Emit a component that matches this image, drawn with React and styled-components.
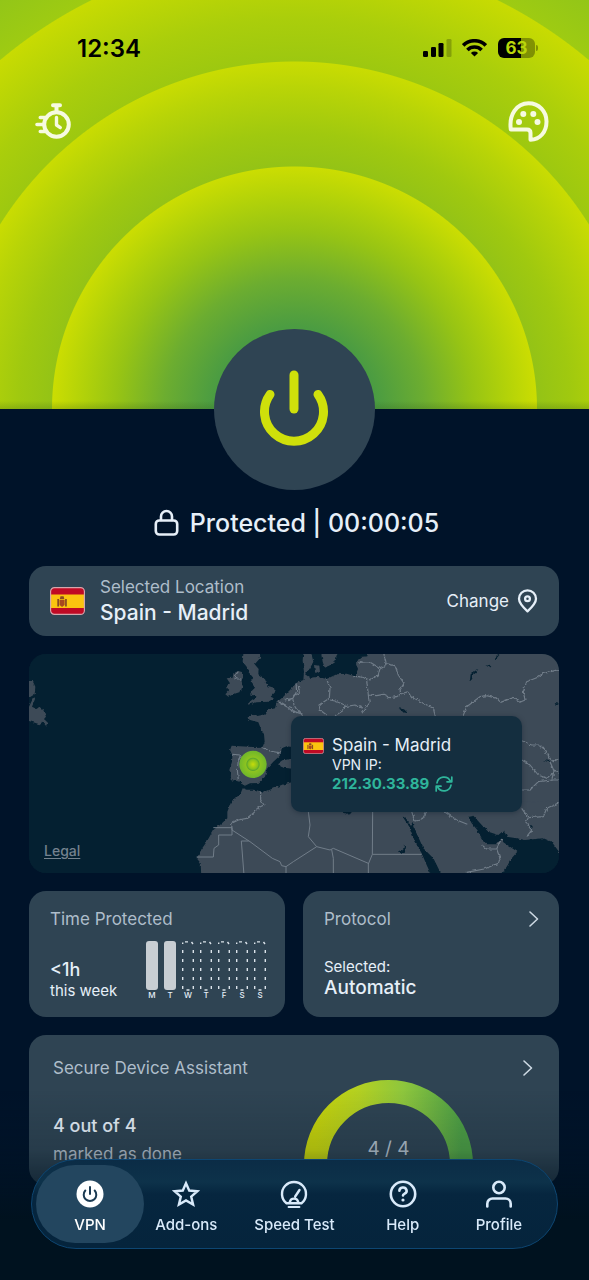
import React from "react";
import styled, { createGlobalStyle, css } from "styled-components";

const colors = {
  page: "#001329",
  card: "#2f4453",
  sea: "#042031",
  land: "#3d4a57",
  border: "#717d89",
  callout: "#142e3f",
  lime: "#cfe00b",
  title: "#aebdca",
  text: "#e6eff8",
  teal: "#2fb59b",
};

const GlobalStyle = createGlobalStyle`
  *, *::before, *::after { box-sizing: border-box; }
  body {
    margin: 0;
    background: ${colors.page};
    color: ${colors.text};
    font-family: Inter, "Liberation Sans", sans-serif;
  }
  button { font: inherit; color: inherit; background: none; border: 0; padding: 0; cursor: pointer; }
  p, h1, h2 { margin: 0; font-weight: 400; }
  svg { display: block; }
`;

const Page = styled.div`
  min-height: 100vh;
  display: flex;
  flex-direction: column;
`;

const Hero = styled.header`
  height: 409px;
  padding-top: 28px;
  background:
    linear-gradient(to top, rgba(40, 80, 20, 0.22), rgba(40, 80, 20, 0) 8px),
    radial-gradient(
      circle at 50% 100%,
      #46993f 0, #4b9c42 82px, #6cad30 130px, #97c414 178px, #b2d209 212px, #cbdd02 242px,
      #94c316 243px, #a0c90f 276px, #b8d407 320px, #c9dc02 347px,
      #9dc810 348px, #aace0b 390px, #bcd605 430px, #c8db02 456px,
      #9ecb12 457px, #8fc41a 520px
    );
`;

const StatusBar = styled.div`
  height: 40px;
  padding: 0 51px 0 77px;
  display: flex;
  align-items: center;
  justify-content: space-between;
  color: #000;
`;

const Clock = styled.time`
  font-size: 24px;
  font-weight: 600;
`;

const StatusIcons = styled.div`
  display: flex;
  align-items: center;
  gap: 10px;
`;

const Battery = styled.div`
  width: 37px;
  height: 20px;
  margin-left: 1px;
  border-radius: 6px;
  display: flex;
  align-items: center;
  justify-content: center;
  font-size: 17px;
  line-height: 20px;
  font-weight: 700;
  color: #b9d60a;
  background: linear-gradient(to right, #000 63%, rgba(0, 0, 0, 0.32) 63%);
`;

const HeroActions = styled.div`
  height: 40px;
  margin-top: 33px;
  padding: 0 40px 0 35px;
  display: flex;
  align-items: center;
  justify-content: space-between;
`;

const PowerButton = styled.button`
  position: relative;
  align-self: center;
  width: 161px;
  height: 161px;
  margin-top: -80px;
  border-radius: 50%;
  background: ${colors.card};
  display: flex;
  align-items: center;
  justify-content: center;
`;

const StatusLine = styled.p`
  height: 34px;
  margin: 16px 0 26px;
  padding-left: 4px;
  display: flex;
  align-items: center;
  justify-content: center;
  gap: 11px;
  font-size: 25px;
  line-height: 34px;
  font-weight: 500;
`;

const Content = styled.main`
  padding: 0 30px 96px 29px;
  display: flex;
  flex-direction: column;
  gap: 18px;
`;

const Card = styled.section`
  border-radius: 17px;
  background: ${colors.card};
`;

const LocationCard = styled(Card)`
  padding: 9px 21px;
  display: flex;
  align-items: center;
  gap: 15px;
`;

const LocationText = styled.div`
  flex: 1;
`;

const Label = styled.h2`
  font-size: 17px;
  line-height: 24px;
  color: ${colors.title};
`;

const LocationName = styled.p`
  font-size: 21px;
  line-height: 28px;
  font-weight: 500;
`;

const ChangeButton = styled.button`
  display: flex;
  align-items: center;
  gap: 8px;
  font-size: 17px;
`;

const MapCard = styled(Card)`
  position: relative;
  height: 219px;
  overflow: hidden;
  background: ${colors.sea};
`;

const MapDrawing = styled.svg`
  width: 100%;
  height: 100%;
`;

const LegalLink = styled.a`
  position: absolute;
  left: 15px;
  bottom: 12px;
  font-size: 14px;
  line-height: 20px;
  font-weight: 500;
  color: #74828e;
  text-underline-offset: 2px;
`;

const Callout = styled.div`
  position: absolute;
  top: 62px;
  right: 37px;
  width: 231px;
  padding: 19px 12px;
  border-radius: 10px;
  background: ${colors.callout};
  box-shadow: 0 1px 5px rgba(0, 20, 35, 0.35);
  display: flex;
  gap: 8px;
`;

const CalloutFlag = styled.div`
  padding-top: 3px;
`;

const CalloutName = styled.p`
  font-size: 17px;
  line-height: 20px;
`;

const CalloutLine = styled.p`
  display: flex;
  align-items: center;
  gap: 6px;
  font-size: ${(p) => (p.$accent ? 15 : 14)}px;
  line-height: 19px;
  font-weight: ${(p) => (p.$accent ? 700 : 400)};
  color: ${(p) => (p.$accent ? colors.teal : "inherit")};
`;

const CardPair = styled.div`
  display: grid;
  grid-template-columns: 1fr 1fr;
  gap: 18px;
`;

const StatCard = styled(Card)`
  padding: 16px 19px 17px 21px;
  display: flex;
  flex-direction: column;
  gap: 9px;
`;

const TitleRow = styled.div`
  display: flex;
  align-items: center;
  justify-content: space-between;
`;

const StatBody = styled.div`
  height: 60px;
  display: flex;
  align-items: flex-end;
  justify-content: space-between;
`;

const Strong = styled.p`
  font-size: ${(p) => (p.$large ? 19 : 18)}px;
  line-height: 24px;
  font-weight: 500;
`;

const Small = styled.p`
  font-size: 15px;
  line-height: 18px;
`;

const Week = styled.ol`
  margin: 0;
  padding: 0;
  list-style: none;
  display: flex;
  gap: 6px;
`;

const Day = styled.li`
  width: 12px;
  display: flex;
  flex-direction: column;
  align-items: center;
  font-size: 8px;
  line-height: 10px;
  font-weight: 500;
`;

const DayBar = styled.div`
  width: 12px;
  height: 49px;
  ${(p) =>
    p.$filled &&
    css`
      border-radius: 3px;
      background: #c8ced3;
    `}
`;

const AssistantCard = styled(Card)`
  height: 150px;
  padding: 21px 25px 0 24px;
  overflow: hidden;
`;

const AssistantBody = styled.div`
  display: grid;
  grid-template-columns: 190px 1fr;
`;

const AssistantText = styled.div`
  padding-top: 34px;
`;

const Muted = styled.p`
  margin-top: 4px;
  font-size: 17px;
  line-height: 24px;
  color: #b3bfca;
`;

const Gauge = styled.div`
  justify-self: center;
  display: grid;
  > * { grid-area: 1 / 1; }
`;

const GaugeValue = styled.p`
  justify-self: center;
  padding-top: 56px;
  font-size: 19px;
  line-height: 26px;
  color: #b3bfca;
`;

const BottomFade = styled.div`
  position: fixed;
  left: 0;
  right: 0;
  bottom: 0;
  height: 190px;
  pointer-events: none;
  background: linear-gradient(to bottom, rgba(0, 18, 32, 0), rgba(0, 18, 32, 0.16) 60px, rgba(0, 18, 32, 0.55) 95px, #00121f 130px);
`;

const NavBar = styled.nav`
  position: fixed;
  left: 31px;
  right: 31px;
  bottom: 31px;
  height: 90px;
  padding: 5px 4px;
  border: 1px solid #0d4672;
  border-radius: 45px;
  background: linear-gradient(to bottom, #0b2c46, #0d324a 22px, #06263f 34px, #05243c);
  display: grid;
  grid-template-columns: 9fr 7fr 11fr 7fr 9fr;
`;

const NavItem = styled.button`
  min-width: 0;
  padding-top: 7px;
  border-radius: 39px;
  background: ${(p) => (p.$active ? "#23465f" : "none")};
  color: ${(p) => (p.$active ? "#ffffff" : "#d9eafa")};
  display: flex;
  flex-direction: column;
  align-items: center;
  justify-content: center;
  gap: 7px;
  font-size: 15px;
  line-height: 20px;
  font-weight: 500;
  white-space: nowrap;
`;

const stroke = { fill: "none", stroke: "currentColor", strokeLinecap: "round", strokeLinejoin: "round" };

const SignalIcon = () => (
  <svg width="29" height="18" viewBox="0 0 29 18" aria-hidden="true">
    <rect x="0" y="12" width="5" height="6" rx="1.3" />
    <rect x="8" y="8" width="5" height="10" rx="1.3" />
    <rect x="15.500" y="4" width="5" height="14" rx="1.3" />
    <rect x="23.500" y="0" width="5" height="18" rx="1.3" opacity="0.22" />
  </svg>
);

const WifiIcon = () => (
  <svg width="25" height="18" viewBox="0 0 25 18" fill="none" stroke="#000" strokeWidth="3.600" aria-hidden="true">
    <path d="M1.200 6.400a16 16 0 0 1 22.600 0" />
    <path d="M5.400 10.900a10 10 0 0 1 14.200 0" />
    <path d="M12.500 17.600l-3.600-3.700a5.100 5.100 0 0 1 7.200 0z" fill="#000" stroke="none" />
  </svg>
);

const BatteryTip = styled.span`
  width: 2px;
  height: 6px;
  margin-left: -9px;
  border-radius: 0 2px 2px 0;
  background: rgba(0, 0, 0, 0.32);
`;

const StopwatchIcon = () => (
  <svg width="37" height="36" viewBox="0 0 37 36" color="#f6fae0" strokeWidth="4" {...stroke} aria-hidden="true">
    <circle cx="21.500" cy="21.500" r="12.300" />
    <path d="M18 2.200h7M21.500 2.500v6" />
    <path d="M21.500 14.500v7.500l3.800 2.600" strokeWidth="3.400" />
    <path d="M5.300 14.500h5M2 21.500h7M5.300 28.500h5" strokeWidth="3.600" />
  </svg>
);

const PaletteIcon = () => (
  <svg width="41" height="41" viewBox="0 0 41 41" color="#f6fae0" strokeWidth="4" {...stroke} aria-hidden="true">
    <path d="M2.800 28.500C.8 14 8.500 2.300 20.500 2.300c10.600 0 18 8 18 18.200 0 10.500-6.500 18.200-16 18.200V32c0-2.300-1.200-3.500-3.500-3.500z" />
    <g fill="currentColor" stroke="none">
      <circle cx="11" cy="21" r="3" />
      <circle cx="15.300" cy="13" r="3" />
      <circle cx="25.300" cy="13" r="3" />
      <circle cx="29.500" cy="21" r="3" />
    </g>
  </svg>
);

const PowerIcon = () => (
  <svg width="71" height="79" viewBox="0 0 71 79" color={colors.lime} strokeWidth="9" {...stroke} aria-hidden="true">
    <path d="M35 5v34" />
    <path d="M11 24.500A29.500 29.500 0 1 0 59 24.500" />
  </svg>
);

const LockIcon = () => (
  <svg width="25" height="28" viewBox="0 0 25 28" strokeWidth="2.600" {...stroke} aria-hidden="true">
    <rect x="1.800" y="11.500" width="21.400" height="14" rx="3.500" />
    <path d="M7 11V7.500a5.500 5.500 0 0 1 11 0V11" />
  </svg>
);

const PinIcon = () => (
  <svg width="21" height="24" viewBox="0 0 21 24" strokeWidth="2.300" {...stroke} aria-hidden="true">
    <path d="M10.500 22.300C5.500 17.800 2 13.800 2 9.800a8.500 8.500 0 0 1 17 0c0 4-3.500 8-8.500 12.500z" />
    <circle cx="10.500" cy="9.700" r="2.400" />
  </svg>
);

const Chevron = () => (
  <svg width="12" height="18" viewBox="0 0 12 18" color="#cdd9e3" strokeWidth="1.600" {...stroke} aria-hidden="true">
    <path d="M2 2l7.500 7-7.500 7" />
  </svg>
);

const RefreshIcon = () => (
  <svg width="18" height="16" viewBox="0 0 18 16" strokeWidth="1.700" {...stroke} aria-hidden="true">
    <path d="M2 6.800A7.100 7.100 0 0 1 15.300 5M16 9.200A7.100 7.100 0 0 1 2.700 11" />
    <path d="M16.800 1v4.800H12M1.200 15v-4.800H6" />
  </svg>
);

const Flag = ({ width, height }) => (
  <svg width={width} height={height} viewBox="0 0 36 28" preserveAspectRatio="none" role="img" aria-label="Spain">
    <rect x="0.600" y="0.600" width="34.800" height="26.800" rx="4" fill="#c00a24" />
    <rect x="1" y="7.500" width="34" height="13.500" fill="#fbc40f" />
    <g fill="#8a4a22">
      <rect x="7.500" y="12" width="1.800" height="7.500" />
      <rect x="15.500" y="12" width="1.800" height="7.500" />
      <path d="M9.800 13h5.200v5l-2.600 2-2.600-2z" fill="#a8481f" />
      <path d="M10 12.300l.8-3h3.200l.8 3z" />
    </g>
    <rect x="0.600" y="0.600" width="34.800" height="26.800" rx="4" fill="none" stroke="#d5a6ac" strokeWidth="1.200" />
  </svg>
);

const VpnIcon = () => (
  <svg width="28" height="28" viewBox="0 0 28 28" aria-hidden="true">
    <circle cx="14" cy="14" r="13.500" fill="#fff" />
    <path d="M14 7v7M9.300 10.500a6.300 6.300 0 1 0 9.400 0" fill="none" stroke="#1b3a52" strokeWidth="2" strokeLinecap="round" />
  </svg>
);

const StarIcon = () => (
  <svg width="28" height="28" viewBox="0 0 28 28" strokeWidth="2.400" {...stroke} strokeLinejoin="miter" aria-hidden="true">
    <path d="M14 3.200l3.200 7.300 8.200.7-6.200 5.400 1.900 8L14 20.400l-7.100 4.200 1.900-8-6.200-5.400 8.200-.7z" />
  </svg>
);

const SpeedIcon = () => (
  <svg width="28" height="28" viewBox="0 0 28 28" strokeWidth="2.400" {...stroke} aria-hidden="true">
    <path d="M6.500 23.300A12 12 0 1 1 21.500 23.300z" />
    <path d="M9.800 22a4.300 4.300 0 0 1 8.400 0M15.200 16.500l4.300-6.500" />
    <path d="M8.500 27h11" strokeWidth="1.800" />
  </svg>
);

const HelpIcon = () => (
  <svg width="28" height="28" viewBox="0 0 28 28" strokeWidth="2.600" {...stroke} aria-hidden="true">
    <circle cx="14" cy="14" r="12.200" />
    <path d="M10.400 10.800a3.600 3.300 0 1 1 5 3c-1 .5-1.400 1-1.400 1.600" />
    <circle cx="14" cy="20" r="1.600" fill="currentColor" stroke="none" />
  </svg>
);

const ProfileIcon = () => (
  <svg width="28" height="28" viewBox="0 0 28 28" strokeWidth="2.600" {...stroke} aria-hidden="true">
    <circle cx="14" cy="7.500" r="5.700" />
    <path d="M2.300 26.500v-2.800a5.200 5.200 0 0 1 5.200-5.200h13a5.200 5.200 0 0 1 5.200 5.200v2.800" />
  </svg>
);

const EmptyBar = () => (
  <svg width="12" height="51" viewBox="0 0 12 51" fill="none" stroke="#dbe3ea" strokeWidth="1.400" aria-hidden="true">
    <path d="M.7 48V1.500M11.300 48V4" strokeDasharray="3 6" />
    <path d="M3 .9h3M9.500 1l1.500 2M4.500 49h3" />
  </svg>
);

const WorldMap = () => (
  <MapDrawing viewBox="27 27 1590 657" preserveAspectRatio="xMidYMid slice" role="img" aria-label="Map">
    <defs>
      <filter id="coast" x="0" y="0" width="100%" height="100%" colorInterpolationFilters="sRGB">
        <feTurbulence type="fractalNoise" baseFrequency="0.09" numOctaves="2" seed="4" />
        <feDisplacementMap in="SourceGraphic" scale="10" xChannelSelector="R" yChannelSelector="G" />
      </filter>
      <radialGradient id="marker">
        <stop offset="0" stopColor="#c6dc0a" />
        <stop offset="0.350" stopColor="#86c01e" />
        <stop offset="0.450" stopColor="#5fa82c" />
        <stop offset="0.520" stopColor="#8cc420" />
        <stop offset="1" stopColor="#6fb62b" />
      </radialGradient>
    </defs>
    <g filter="url(#coast)">
      <rect x="0" y="0" width="1660" height="720" fill={colors.sea} />
      <g fill={colors.land}>
        <path d="M1660 0H1045L1042 34 1020 36 1008 55 1014 72 1005 94 980 86 950 88 920 102 895 96 870 98 855 88 870 70 880 50 868 0H852L848 50 852 80 850 105 830 113 815 130 790 155 770 172 765 190 742 196 738 208 712 213 706 208 686 216 688 224 715 232 722 250 732 268 734 290 728 305 700 306 660 304 635 302 630 315 637 330 636 350 628 375 633 385 632 405 650 408 663 412 672 424 690 415 715 414 735 395 742 370 760 350 782 330 785 310 800 304 816 306 870 300 920 480H1660z" />
        <path d="M870 412L816 412 790 418 735 440 700 434 680 434 668 430 662 445 632 475 622 500 622 520 600 540 580 555 560 590 545 612 530 640 542 655 545 720H1660V470H900z" />
        <path d="M774 358L790 346 830 338V372L790 368z" />
        <path d="M900 0L908 50 914 68 930 62 945 52 952 27V0zM882 60L898 62 900 80 886 88z" />
        <path d="M672 0L670 27 668 50 680 65 686 82 700 98 692 110 705 128 695 138 690 148 710 155 695 165 680 180 710 172 745 170 762 160 752 155 765 142 762 128 742 122 732 100 715 88 716 72 704 58 720 40 722 0z" />
        <path d="M640 85L655 78 668 82 672 95 664 105 668 122 662 140 640 148 625 155 616 148 628 135 618 125 630 115 620 100 638 98z" />
        <path d="M0 108H38L46 125 44 148 27 158H0zM0 228V185H27L40 158 45 162 36 185 50 192 58 185 70 195 78 215 72 222 85 235 80 245 68 230 58 238 40 232 27 228z" />
      </g>
      <g transform="translate(780 0)" fill={colors.sea}>
        <path d="M368 515L376 517 392 542 398 530 400 545 412 570 430 610 460 640 490 700H458L440 660 425 625 405 590 388 545z" />
        <path d="M565 515L580 512 610 545 625 560 655 570 672 556 680 575 710 580 735 585 790 580 815 590 838 622H880V720H645L680 665 695 640 712 620 690 605 670 592 665 578 650 598 620 598 605 580 592 555 575 535z" />
        <path d="M190 500h26l-6 8-12 1z" />
        <path d="M570 105l2-17 13-10 10-6-8 12-8 6-4 18zM616 61l18 2-4 5zM640 42l12-10 8-4-12 14zM356 190l16 3 12 12-14-3zM356 624l14-10 2-14 6 6-4 18zM788 346l24 2-4 4zM750 538l8 6-4 10zM824 174l14 2-10 6z" />
      </g>
      <g fill="none" stroke={colors.border} strokeWidth="3.500" strokeLinejoin="round">
        <g transform="translate(780 0)">
          <path d="M310 20L318 52 314 64 300 72 M318 56L345 62 355 90 372 115 360 135 362 148 M238 52L268 50 300 70 295 90 270 105 240 95 220 95 M260 105L265 150 268 175 245 205 M265 150L290 152 310 148 330 158 350 155 362 147 385 140 395 155 430 175 460 190 466 215" />
          <path d="M140 102L150 130 148 160 117 180 120 195 140 210 M150 165L165 168 195 180 192 195 165 212 M195 185L225 180 248 190 M48 115L50 140 38 160 42 180 48 190 68 212 M0 170L20 182 40 190 M15 165L38 160" />
          <path d="M548 215L560 185 580 170 600 155 620 152 650 160 662 172 700 157 720 172 735 165 730 140 740 110 770 98 790 85 845 72" />
          <path d="M720 285L755 300 780 300 790 310 810 340 820 350 845 335 M720 342L750 360 775 390 800 400 825 380 845 385 M720 435L750 435 775 410 815 405 845 405 M810 350L822 378 815 405 M725 490L745 518 790 515 800 490 845 470 M745 518L738 532 755 555 740 575" />
          <path d="M490 498L530 525 562 538 M395 500L405 528 425 525 440 500 M605 600L620 612 650 612 665 580 M650 612L660 640 655 655 612 672 560 682" />
        </g>
        <path d="M722 440L722 465 732 480 712 490 700 505 680 520 655 525 635 535 636 555 M637 328L662 330 655 345 652 375 655 405 M728 308L750 318 782 324 M664 102L645 102 648 88 655 80 M775 170L800 185 815 197 840 205 M790 160L815 165 822 150 838 145 835 120" />
      </g>
    </g>
    <g fill="none" stroke={colors.border} strokeWidth="3">
      <path d="M580 548H636V570H596V600L582 610 580 636H530 M636 555L690 590 757 640 780 650 785 662 798 665 820 650 890 605 M672 690L664 588H686 M798 665V690" />
      <path transform="translate(780 0)" d="M85 500L90 540 85 575 110 605 150 615 160 610 265 655V690 M278 500L277 628H425 M265 657L277 628 M155 614L160 640V690" />
    </g>
    <circle cx="699" cy="358" r="41" fill="url(#marker)" />
  </MapDrawing>
);

const GaugeArc = () => (
  <svg width="169" height="106" viewBox="0 0 169 106" fill="none" aria-hidden="true">
    <defs>
      <linearGradient id="arc" x1="0" y1="0" x2="1" y2="0">
        <stop offset="0" stopColor="#c9d60b" />
        <stop offset="0.300" stopColor="#b3d022" />
        <stop offset="0.600" stopColor="#8ec63d" />
        <stop offset="1" stopColor="#4ea045" />
      </linearGradient>
    </defs>
    <path d="M11.500 106V84.500a73 73 0 0 1 146 0V106" stroke="url(#arc)" strokeWidth="23" />
  </svg>
);

const days = [
  { letter: "M", filled: true },
  { letter: "T", filled: true },
  { letter: "W" },
  { letter: "T" },
  { letter: "F" },
  { letter: "S" },
  { letter: "S" },
];

const tabs = [
  { label: "VPN", Icon: VpnIcon, active: true },
  { label: "Add-ons", Icon: StarIcon },
  { label: "Speed Test", Icon: SpeedIcon },
  { label: "Help", Icon: HelpIcon },
  { label: "Profile", Icon: ProfileIcon },
];

export default function App() {
  return (
    <>
      <GlobalStyle />
      <Page>
        <Hero>
          <StatusBar>
            <Clock>12:34</Clock>
            <StatusIcons>
              <SignalIcon />
              <WifiIcon />
              <Battery>63</Battery>
              <BatteryTip />
            </StatusIcons>
          </StatusBar>
          <HeroActions>
            <button type="button" aria-label="Timer"><StopwatchIcon /></button>
            <button type="button" aria-label="Themes"><PaletteIcon /></button>
          </HeroActions>
        </Hero>
        <PowerButton type="button" aria-label="Disconnect"><PowerIcon /></PowerButton>
        <StatusLine>
          <LockIcon />
          Protected | 00:00:05
        </StatusLine>

        <Content>
          <LocationCard>
            <Flag width={35} height={28} />
            <LocationText>
              <Label>Selected Location</Label>
              <LocationName>Spain - Madrid</LocationName>
            </LocationText>
            <ChangeButton type="button">Change <PinIcon /></ChangeButton>
          </LocationCard>

          <MapCard>
            <WorldMap />
            <LegalLink href="#legal">Legal</LegalLink>
            <Callout>
              <CalloutFlag><Flag width={21} height={16} /></CalloutFlag>
              <div>
                <CalloutName>Spain - Madrid</CalloutName>
                <CalloutLine>VPN IP:</CalloutLine>
                <CalloutLine $accent>
                  212.30.33.89
                  <button type="button" aria-label="Refresh"><RefreshIcon /></button>
                </CalloutLine>
              </div>
            </Callout>
          </MapCard>

          <CardPair>
            <StatCard>
              <Label>Time Protected</Label>
              <StatBody>
                <div>
                  <Strong>&lt;1h</Strong>
                  <Small>this week</Small>
                </div>
                <Week>
                  {days.map((day, i) => (
                    <Day key={i}>
                      <DayBar $filled={day.filled}>{!day.filled && <EmptyBar />}</DayBar>
                      {day.letter}
                    </Day>
                  ))}
                </Week>
              </StatBody>
            </StatCard>
            <StatCard>
              <TitleRow>
                <Label>Protocol</Label>
                <button type="button" aria-label="Open protocol"><Chevron /></button>
              </TitleRow>
              <StatBody>
                <div>
                  <Small>Selected:</Small>
                  <Strong $large>Automatic</Strong>
                </div>
              </StatBody>
            </StatCard>
          </CardPair>

          <AssistantCard>
            <TitleRow>
              <Label>Secure Device Assistant</Label>
              <button type="button" aria-label="Open assistant"><Chevron /></button>
            </TitleRow>
            <AssistantBody>
              <AssistantText>
                <Strong>4 out of 4</Strong>
                <Muted>marked as done</Muted>
              </AssistantText>
              <Gauge>
                <GaugeArc />
                <GaugeValue>4 / 4</GaugeValue>
              </Gauge>
            </AssistantBody>
          </AssistantCard>
        </Content>

        <BottomFade />
        <NavBar>
          {tabs.map(({ label, Icon, active }) => (
            <NavItem key={label} type="button" $active={active}>
              <Icon />
              {label}
            </NavItem>
          ))}
        </NavBar>
      </Page>
    </>
  );
}
